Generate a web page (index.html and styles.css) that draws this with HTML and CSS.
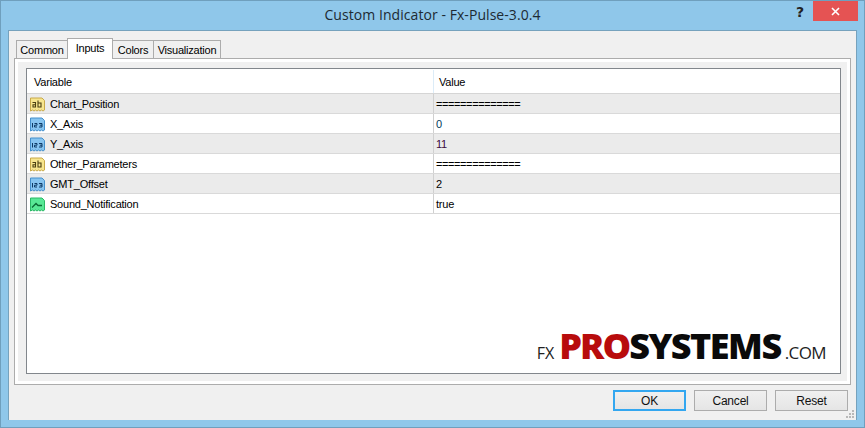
FILE: index.html
```html
<!DOCTYPE html>
<html lang="en">
<head>
<meta charset="utf-8">
<title>Custom Indicator - Fx-Pulse-3.0.4</title>
<link rel="stylesheet" href="styles.css">
</head>
<body>
<div class="window">
  <header class="titlebar">
    <div class="title">Custom Indicator - Fx-Pulse-3.0.4</div>
    <div class="help">?</div>
    <div class="close"><svg width="9" height="9" viewBox="0 0 9 9"><path d="M1 1l7 7M8 1l-7 7" stroke="#fff" stroke-width="1.6" fill="none"/></svg></div>
  </header>
  <main class="client">
    <nav class="tabs">
      <div class="tab t-common">Common</div>
      <div class="tab t-inputs active">Inputs</div>
      <div class="tab t-colors">Colors</div>
      <div class="tab t-vis">Visualization</div>
    </nav>
    <section class="panel">
      <div class="list">
        <div class="row head"><div class="var">Variable</div><div class="val">Value</div></div>
        <div class="row odd"><div class="var"><svg class="ico" viewBox="0 0 17 16"><use href="#ab"/></svg>Chart_Position</div><div class="val eq">==============</div></div>
        <div class="row"><div class="var"><svg class="ico" viewBox="0 0 17 16"><use href="#num"/></svg>X_Axis</div><div class="val blue">0</div></div>
        <div class="row odd"><div class="var"><svg class="ico" viewBox="0 0 17 16"><use href="#num"/></svg>Y_Axis</div><div class="val purple">11</div></div>
        <div class="row"><div class="var"><svg class="ico" viewBox="0 0 17 16"><use href="#ab"/></svg>Other_Parameters</div><div class="val eq">==============</div></div>
        <div class="row odd"><div class="var"><svg class="ico" viewBox="0 0 17 16"><use href="#num"/></svg>GMT_Offset</div><div class="val">2</div></div>
        <div class="row"><div class="var"><svg class="ico" viewBox="0 0 17 16"><use href="#bool"/></svg>Sound_Notification</div><div class="val">true</div></div>
        <div class="logo"><span class="fx">FX</span><span class="pro">PRO</span><span class="sys">SYSTEMS</span><span class="com">.COM</span></div>
      </div>
    </section>
    <footer class="buttons">
      <button class="btn default">OK</button>
      <button class="btn">Cancel</button>
      <button class="btn">Reset</button>
    </footer>
    <svg class="grip" width="9" height="9" viewBox="0 0 9 9"><path d="M6 0h2v2H6zM3 3h2v2H3zM6 3h2v2H6zM0 6h2v2H0zM3 6h2v2H3zM6 6h2v2H6z" fill="#b8b8b8"/></svg>
  </main>
</div>
<svg width="0" height="0" class="defs">
  <defs>
    <path id="leaf" d="M1.500 2H13L15.500 4.500V14L14 15 12.500 14 11 15 9.500 14 8 15 6.500 14 5 15 3.500 14 1.500 15Z"/>
    <g id="ab">
      <use href="#leaf" fill="#f7e58e" stroke="#c8a94a"/>
      <path d="M3.500 6.500H6.500V11H4V8.800H6.500M9 4.500V11H12V7H9" fill="none" stroke="#4b4012" stroke-width="1.100"/>
    </g>
    <g id="num">
      <use href="#leaf" fill="#86c4f0" stroke="#4590cc"/>
      <path d="M3.500 7V11.500M5.500 7.500H8V9.200H5.500V11H8M10 7.500H13V11H10M10.800 9.200H13" fill="none" stroke="#0d3a66" stroke-width="1"/>
    </g>
    <g id="bool">
      <use href="#leaf" fill="#58e896" stroke="#2ab866"/>
      <path d="M3 11.500L7 7.500 9 9.500H13" fill="none" stroke="#0b6a36" stroke-width="1.300"/>
    </g>
  </defs>
</svg>
</body>
</html>
```
FILE: styles.css
```css
* { box-sizing: border-box; }
html, body { margin: 0; padding: 0; }
body { width: 865px; height: 428px; overflow: hidden; font-family: "Liberation Sans", Arial, sans-serif; font-size: 11px; letter-spacing: -0.22px; color: #000; }
.defs { position: absolute; }
.window { width: 865px; height: 428px; background: #8fc7ea; border: 1px solid #6f9fbd; display: flex; flex-direction: column; padding: 0 7px 7px 7px; }
.titlebar { height: 29px; flex: none; position: relative; }
.title { position: absolute; left: 0; right: 0; top: 4px; text-align: center; font: 14px "Open Sans", sans-serif; letter-spacing: 0.06px; color: #1d2a33; }
.help { position: absolute; right: 53px; top: 3px; font: bold 14px "DejaVu Sans", sans-serif; letter-spacing: 0; color: #222; }
.close { position: absolute; right: -1px; top: 0; width: 45px; height: 20px; background: #e55353; display: flex; align-items: center; justify-content: center; }
.client { flex: 1; background: #f0f0f0; border: 1px solid #76a2bd; border-width: 1px 1px 0 1px; display: flex; flex-direction: column; padding: 7px 5px 0 5px; position: relative; }
.tabs { display: flex; height: 20px; flex: none; align-items: flex-end; padding-left: 2px; position: relative; z-index: 1; }
.tab { height: 18px; background: #f0f0f0; border: 1px solid #acacac; border-bottom: 0; line-height: 18px; text-align: center; margin-left: -1px; }
.t-common { width: 52px; margin-left: 0; }
.t-inputs { width: 46px; }
.t-colors { width: 42px; }
.t-vis { width: 68px; }
.tab.active { height: 21px; background: #fff; margin-bottom: -1px; line-height: 18px; position: relative; }
.panel { height: 327px; flex: none; background: #f0f0f0; border: 1px solid #acacac; box-shadow: inset 3px 3px 0 #fff, inset -3px -3px 0 #fff; padding: 9px 9px 10px 11px; }
.list { height: 100%; background: #fff; border: 1px solid #82878c; position: relative; }
.row { display: flex; height: 20px; border-bottom: 1px solid #d9d9d9; align-items: center; }
.row.head { height: 25px; background: #fff; border-bottom: 1px solid #d5d5d5; padding-top: 1px; }
.row.odd { background: #ebebeb; }
.var { width: 407px; flex: none; display: flex; align-items: center; padding-left: 2px; gap: 4px; height: 100%; border-right: 1px solid #d0d0d0; }
.row.head .var { padding-left: 7px; border-right-color: #dcecf8; }
.val { padding-left: 2px; }
.eq { letter-spacing: -0.4px; }
.blue { color: #003a5c; }
.purple { color: #3c0a3c; }
.row.head .val { padding-left: 5px; }
.ico { width: 17px; height: 16px; flex: none; }
.logo { position: absolute; right: 14px; bottom: 9px; display: flex; align-items: baseline; font-family: "Open Sans", sans-serif; font-weight: 800; line-height: 1; }
.pro { color: #b80c0c; font-size: 36px; letter-spacing: -2px; margin-left: 5px; }
.sys { color: #0a0a0a; font-size: 36px; letter-spacing: -1.5px; }
.fx { font-size: 16px; font-weight: 400; letter-spacing: 0; color: #222; }
.com { font-size: 17px; font-weight: 400; letter-spacing: -0.6px; color: #222; margin-left: 4px; }
.buttons { display: flex; justify-content: flex-end; gap: 8px; padding: 5px 3px 0 0; }
.btn { width: 73px; height: 21px; border: 1px solid #acacac; background: linear-gradient(#f0f0f0, #e5e5e5); font: 12px "Liberation Sans", sans-serif; letter-spacing: -0.2px; color: #111; padding: 0; }
.btn.default { border: 2px solid #33a7f0; }
.grip { position: absolute; right: 1px; bottom: 1px; }
```
